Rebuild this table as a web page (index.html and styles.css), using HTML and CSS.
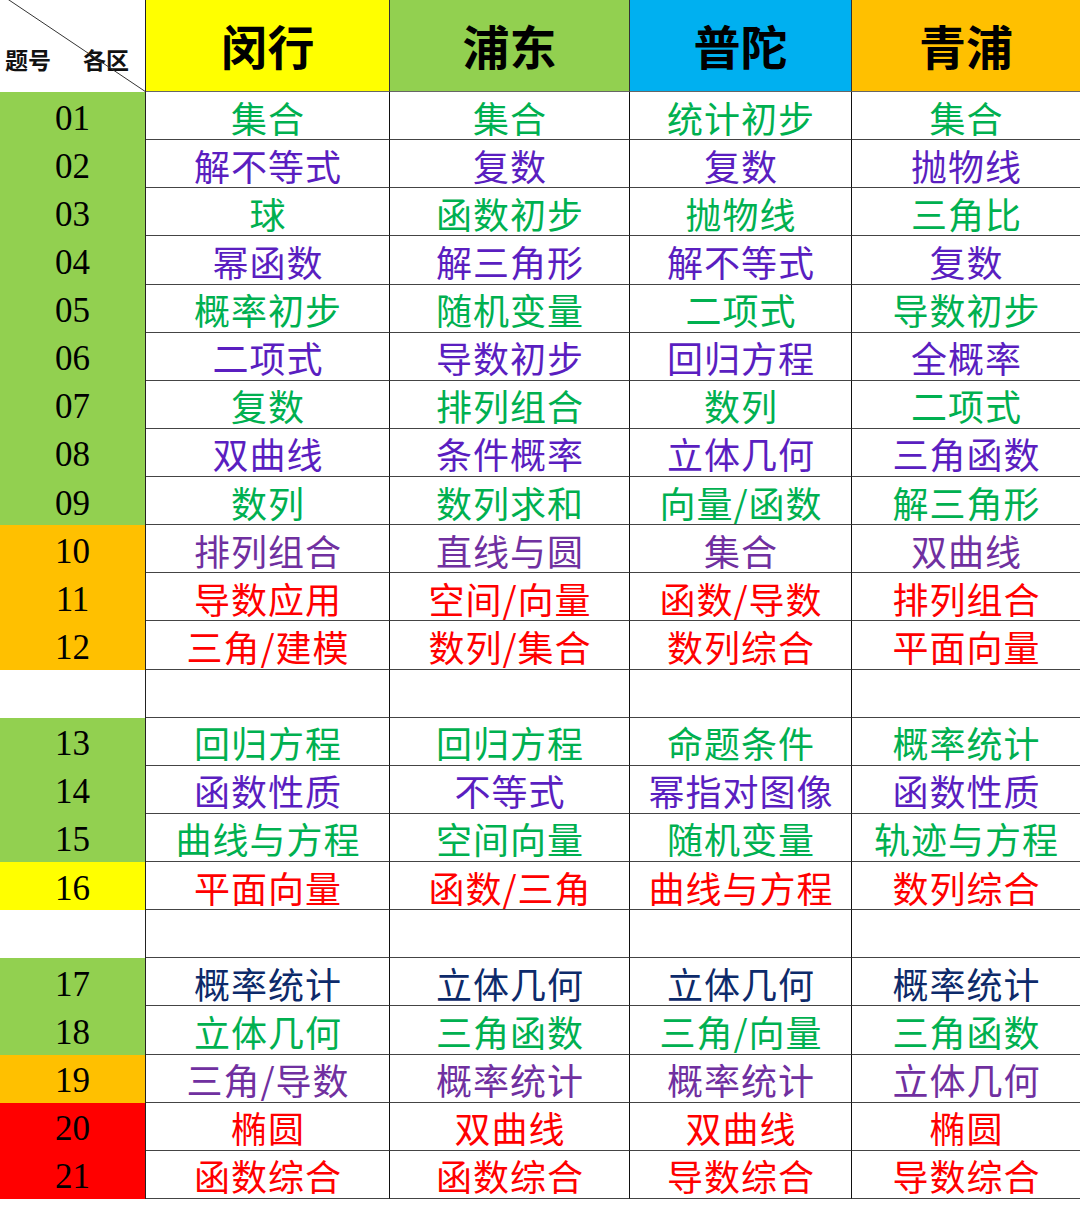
FILE: index.html
```html
<!DOCTYPE html>
<html lang="zh-CN">
<head>
<meta charset="utf-8">
<title>各区题号分布</title>
<link rel="stylesheet" href="styles.css">
</head>
<body>
<div class="sheet">
  <div class="corner">
    <svg class="diag" width="146" height="92" viewBox="0 0 146 92"><line x1="6" y1="-2" x2="146" y2="92" stroke="#333" stroke-width="1"/></svg>
    <span class="corner-a">题号</span><span class="corner-b">各区</span>
  </div>
  <div class="head h-yellow">闵行</div>
  <div class="head h-green">浦东</div>
  <div class="head h-blue">普陀</div>
  <div class="head h-orange last">青浦</div>

  <div class="num n-green">01</div><div class="c g">集合</div><div class="c g">集合</div><div class="c g">统计初步</div><div class="c g last">集合</div>
  <div class="num n-green">02</div><div class="c p">解不等式</div><div class="c p">复数</div><div class="c p">复数</div><div class="c p last">抛物线</div>
  <div class="num n-green">03</div><div class="c g">球</div><div class="c g">函数初步</div><div class="c g">抛物线</div><div class="c g last">三角比</div>
  <div class="num n-green">04</div><div class="c p">幂函数</div><div class="c p">解三角形</div><div class="c p">解不等式</div><div class="c p last">复数</div>
  <div class="num n-green">05</div><div class="c g">概率初步</div><div class="c g">随机变量</div><div class="c g">二项式</div><div class="c g last">导数初步</div>
  <div class="num n-green">06</div><div class="c p">二项式</div><div class="c p">导数初步</div><div class="c p">回归方程</div><div class="c p last">全概率</div>
  <div class="num n-green">07</div><div class="c g">复数</div><div class="c g">排列组合</div><div class="c g">数列</div><div class="c g last">二项式</div>
  <div class="num n-green">08</div><div class="c p">双曲线</div><div class="c p">条件概率</div><div class="c p">立体几何</div><div class="c p last">三角函数</div>
  <div class="num n-green">09</div><div class="c g">数列</div><div class="c g">数列求和</div><div class="c g">向量/函数</div><div class="c g last">解三角形</div>
  <div class="num n-orange">10</div><div class="c q">排列组合</div><div class="c q">直线与圆</div><div class="c q">集合</div><div class="c q last">双曲线</div>
  <div class="num n-orange">11</div><div class="c r">导数应用</div><div class="c r">空间/向量</div><div class="c r">函数/导数</div><div class="c r last">排列组合</div>
  <div class="num n-orange">12</div><div class="c r">三角/建模</div><div class="c r">数列/集合</div><div class="c r">数列综合</div><div class="c r last">平面向量</div>

  <div class="num n-empty"></div><div class="c"></div><div class="c"></div><div class="c"></div><div class="c last"></div>

  <div class="num n-green">13</div><div class="c g">回归方程</div><div class="c g">回归方程</div><div class="c g">命题条件</div><div class="c g last">概率统计</div>
  <div class="num n-green">14</div><div class="c p">函数性质</div><div class="c p">不等式</div><div class="c p">幂指对图像</div><div class="c p last">函数性质</div>
  <div class="num n-green">15</div><div class="c g">曲线与方程</div><div class="c g">空间向量</div><div class="c g">随机变量</div><div class="c g last">轨迹与方程</div>
  <div class="num n-yellow">16</div><div class="c r">平面向量</div><div class="c r">函数/三角</div><div class="c r">曲线与方程</div><div class="c r last">数列综合</div>

  <div class="num n-empty"></div><div class="c"></div><div class="c"></div><div class="c"></div><div class="c last"></div>

  <div class="num n-green">17</div><div class="c b">概率统计</div><div class="c b">立体几何</div><div class="c b">立体几何</div><div class="c b last">概率统计</div>
  <div class="num n-green">18</div><div class="c g">立体几何</div><div class="c g">三角函数</div><div class="c g">三角/向量</div><div class="c g last">三角函数</div>
  <div class="num n-orange">19</div><div class="c q">三角/导数</div><div class="c q">概率统计</div><div class="c q">概率统计</div><div class="c q last">立体几何</div>
  <div class="num n-red">20</div><div class="c r">椭圆</div><div class="c r">双曲线</div><div class="c r">双曲线</div><div class="c r last">椭圆</div>
  <div class="num n-red">21</div><div class="c r">函数综合</div><div class="c r">函数综合</div><div class="c r">导数综合</div><div class="c r last">导数综合</div>
</div>
</body>
</html>
```
FILE: styles.css
```css
html, body {
  margin: 0;
  padding: 0;
  background: #fff;
}

.sheet {
  display: grid;
  grid-template-columns: 146px 244px 240px 222px 228px;
  grid-template-rows: 92px repeat(23, 48.13px);
  width: 1080px;
  font-family: "Noto Sans CJK SC", "Noto Sans", sans-serif;
}

.sheet > div {
  box-sizing: border-box;
}

.corner {
  position: relative;
  background: #fff;
  border-right: 1px solid #222;
  display: flex;
  align-items: flex-end;
  padding: 0 0 21px 5px;
  font-size: 23px;
  font-weight: 700;
  line-height: 1;
  color: #111;
}

.diag {
  position: absolute;
  left: 0;
  top: 0;
}

.corner-a {
  margin-right: 32px;
}

.head {
  display: flex;
  align-items: center;
  justify-content: center;
  font-size: 47px;
  font-weight: 700;
  line-height: 1;
  color: #000;
  border-right: 1px solid #333;
  border-bottom: 1px solid #666;
  padding-bottom: 2px;
}

.h-yellow { background: #ffff00; }
.h-green { background: #92d050; }
.h-blue { background: #00b0f0; }
.h-orange { background: #ffc000; }

.num {
  display: flex;
  align-items: center;
  justify-content: center;
  font-family: "Liberation Serif", "Times New Roman", serif;
  font-size: 35px;
  line-height: 1;
  color: #000;
  border-right: 1px solid #222;
  padding-top: 4px;
}

.n-green { background: #92d050; }
.n-orange { background: #ffc000; }
.n-yellow { background: #ffff00; }
.n-red { background: #ff0000; }
.n-empty { background: #fff; }

.c {
  display: flex;
  align-items: center;
  justify-content: center;
  font-size: 36px;
  letter-spacing: 1px;
  line-height: 1;
  white-space: nowrap;
  border-right: 1px solid #111;
  border-bottom: 1px solid #444;
  padding-top: 2px;
  padding-left: 1px;
  background: #fff;
}

.last {
  border-right: none;
}

.g { color: #00b050; }
.p { color: #5a1ec0; }
.q { color: #7030a0; }
.r { color: #ff0000; }
.b { color: #0d2a6a; }
```
